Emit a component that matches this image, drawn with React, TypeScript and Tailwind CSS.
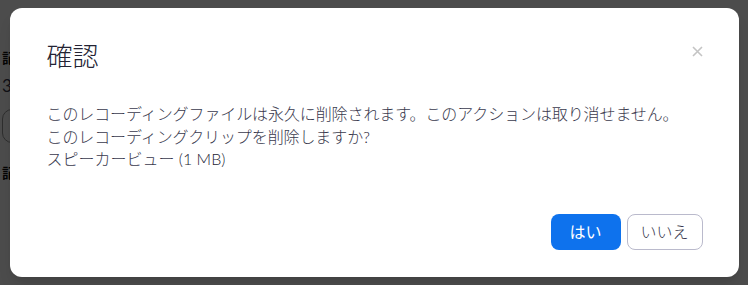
function Backdrop() {
  // the page behind the dialog, only its left edge shows
  return (
    <div className="pl-[2px] pt-[50px] text-[#111]">
      <h3 className="text-[14px] font-bold leading-[16px]">記録</h3>
      <p className="mt-[10px] text-[17px] leading-[20px] text-[#39394d]">3</p>
      <div className="mt-[13px] h-[34px] w-[320px] rounded-[10px] border border-[#999]" />
      <h3 className="mt-[22px] text-[14px] font-bold leading-[16px]">記録</h3>
    </div>
  )
}

export default function App() {
  return (
    <div className="relative h-[285px] w-[748px] overflow-hidden bg-white font-['Lato','Noto_Sans_CJK_JP',sans-serif]">
      <Backdrop />

      {/* Overlay + dialog */}
      <div className="absolute inset-0 flex items-center justify-center bg-black/70">
        <div className="relative w-[729px] rounded-[12px] bg-white pb-[27px] pl-[37px] pr-[36px] pt-[32px] shadow-lg">
          <h2 className="text-[26px] font-light leading-[32px] text-[#232333]">確認</h2>

          <button className="absolute right-[36px] top-[38px] text-[#c4c4c4]">
            <svg width="11" height="11" viewBox="0 0 11 11" fill="none" stroke="currentColor" strokeWidth="1.6">
              <path d="M1 1l9 9M10 1l-9 9" />
            </svg>
          </button>

          <div className="mt-[31px] text-[16px] font-light leading-[22.5px] tracking-[-0.1px] text-[#39394d]">
            <p>このレコーディングファイルは永久に削除されます。このアクションは取り消せません。</p>
            <p>
              このレコーディングクリップを削除しますか<span className="text-[#232333]">?</span>
            </p>
            <p className="tracking-normal">
              スピーカービュー <span className="text-[#232333]">(1 MB)</span>
            </p>
          </div>

          <div className="mt-[43px] flex justify-end gap-[6px]">
            <button className="h-[36px] w-[70px] rounded-[8px] bg-[#0e72ed] text-[16px] text-white">
              はい
            </button>
            <button className="h-[36px] w-[76px] rounded-[8px] border border-[#babacc] bg-white text-[16px] font-light text-[#39394d]">
              いいえ
            </button>
          </div>
        </div>
      </div>
    </div>
  )
}
